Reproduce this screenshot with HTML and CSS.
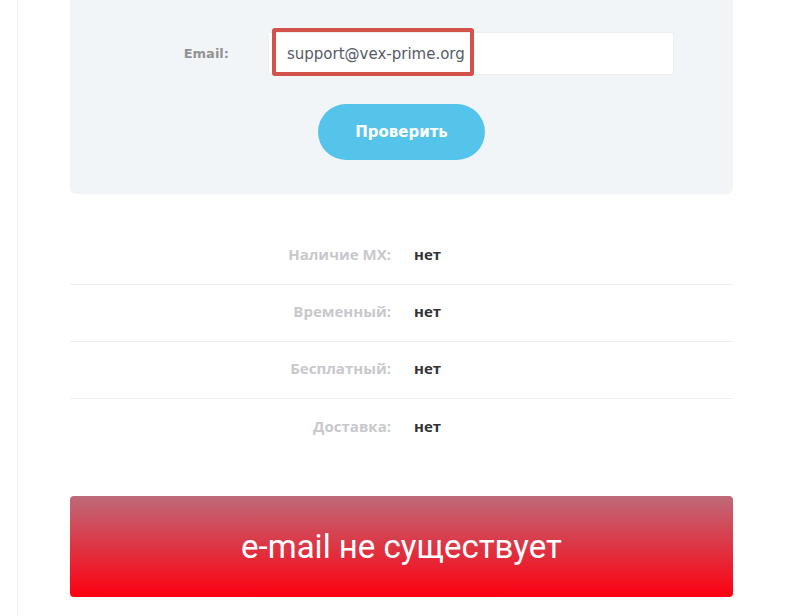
FILE: index.html
```html
<!DOCTYPE html>
<html lang="ru">
<head>
  <meta charset="UTF-8">
  <meta name="viewport" content="width=device-width, initial-scale=1.0">
  <title>Проверка e-mail</title>
  <link rel="stylesheet" href="styles.css">
</head>
<body>
  <div class="page">
    <div class="check-panel">
      <form class="check-form">
        <label class="field-label" for="email">Email:</label>
        <div class="field-wrap">
          <input type="text" id="email" value="support@vex-prime.org">
          <span class="highlight"></span>
        </div>
      </form>
      <div class="actions">
        <button type="button" class="check-btn">Проверить</button>
      </div>
    </div>

    <div class="results">
      <div class="result-row">
        <div class="result-label">Наличие MX:</div>
        <div class="result-value">нет</div>
      </div>
      <div class="result-row">
        <div class="result-label">Временный:</div>
        <div class="result-value">нет</div>
      </div>
      <div class="result-row">
        <div class="result-label">Бесплатный:</div>
        <div class="result-value">нет</div>
      </div>
      <div class="result-row">
        <div class="result-label">Доставка:</div>
        <div class="result-value">нет</div>
      </div>
    </div>

    <div class="verdict">e-mail не существует</div>
  </div>
</body>
</html>
```

FILE: styles.css
```css
* {
  box-sizing: border-box;
  margin: 0;
  padding: 0;
}

body {
  font-family: "DejaVu Sans", sans-serif;
  background-color: white;
  height: 616px;
  overflow: hidden;
}

.page {
  margin-left: 17px;
  min-height: 616px;
  border-left: 1px solid #eeeeee;
  padding: 0 52px;
}

.check-panel {
  background-color: #f2f5f7;
  border-radius: 0 0 6px 6px;
  padding: 32px 0 34px;
}

.check-form {
  display: grid;
  grid-template-columns: 159px 406px;
  column-gap: 39px;
  align-items: center;
}

.field-label {
  text-align: right;
  font-size: 13px;
  color: #939393;
  font-weight: bold;
}

.field-wrap {
  position: relative;
}

.field-wrap input {
  display: block;
  width: 100%;
  height: 43px;
  padding: 0 18px;
  border: 1px solid #eceff1;
  border-radius: 2px;
  background-color: white;
  font-family: "DejaVu Sans", sans-serif;
  font-size: 15px;
  color: #555b66;
  outline: none;
}

.highlight {
  position: absolute;
  left: 4px;
  top: -4px;
  width: 202px;
  height: 48px;
  border: 4px solid #d4524a;
  border-radius: 3px;
}

.actions {
  display: flex;
  justify-content: center;
  margin-top: 29px;
}

.check-btn {
  width: 167px;
  height: 56px;
  border: none;
  border-radius: 28px;
  background-color: #55c4eb;
  color: white;
  font-family: "DejaVu Sans", sans-serif;
  font-size: 15px;
  font-weight: bold;
  cursor: pointer;
}

.results {
  margin-top: 34px;
}

.result-row {
  display: grid;
  grid-template-columns: 321px 1fr;
  column-gap: 23px;
  align-items: center;
  height: 57px;
  padding-bottom: 4px;
  border-bottom: 1px solid #eeeeee;
  font-family: "Open Sans", sans-serif;
  font-size: 15px;
  font-weight: bold;
}

.result-row:last-child {
  border-bottom: none;
}

.result-label {
  text-align: right;
  color: #c8c8cc;
}

.result-value {
  color: #333333;
}

.verdict {
  margin-top: 40px;
  height: 101px;
  border-radius: 4px;
  background: linear-gradient(to bottom, #be6a79, #fd0010);
  color: white;
  font-family: Roboto, sans-serif;
  font-size: 33px;
  display: flex;
  align-items: center;
  justify-content: center;
}
```
